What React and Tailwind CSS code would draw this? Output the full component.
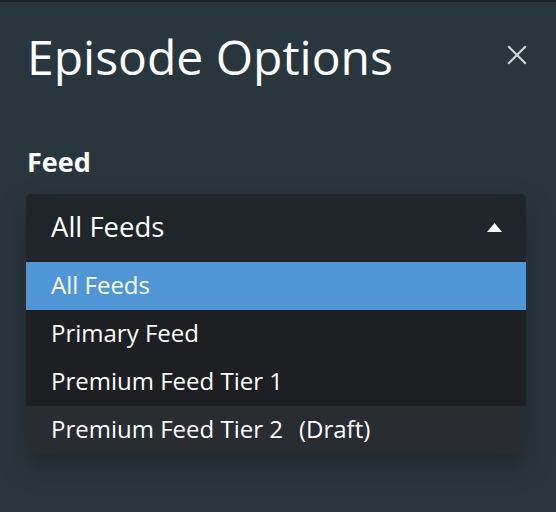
import React from "react";

const font = { fontFamily: '"Open Sans", "Noto Sans", sans-serif' };

export default function App() {
  const options = [
    { label: "All Feeds", cls: "bg-[#5096d6]" },
    { label: "Primary Feed", cls: "bg-[#1e1f23]" },
    { label: "Premium Feed Tier 1", cls: "bg-[#1e1f23]" },
    { label: "Premium Feed Tier 2", extra: "(Draft)", cls: "bg-[#292c30] rounded-b-[5px]" },
  ];
  return (
    <div className="w-[556px] h-[512px] bg-[#2a363e] flex flex-col overflow-hidden" style={font}>
      <div className="h-[2px] bg-[#1b2024] shrink-0" />
      <div className="flex items-start justify-between pl-[27px] pr-[29px] pt-[31px]">
        <h1 className="text-[48px] leading-none text-white font-normal">Episode Options</h1>
        <button className="mt-[12px] w-[20px] h-[20px] flex items-center justify-center text-[#cfd4d7]">
          <svg width="20" height="20" viewBox="0 0 20 20" fill="none" stroke="currentColor" strokeWidth="2.2" strokeLinecap="square">
            <path d="M2 2 L18 18 M18 2 L2 18" />
          </svg>
        </button>
      </div>
      <div className="pl-[26px] pt-[67px]">
        <div className="text-[27px] leading-none font-bold text-white pl-[1px]">Feed</div>
      </div>
      <div className="ml-[26px] mr-[30px] mt-[19px] rounded-[5px] shadow-[0_12px_28px_rgba(0,0,0,0.28)]">
        <div className="h-[68px] bg-[#1f2529] rounded-t-[5px] flex items-center justify-between pl-[25px] pr-[24px]">
          <span className="text-[27.5px] leading-none text-white pb-[3px]">All Feeds</span>
          <svg width="15" height="9" viewBox="0 0 15 9" className="mb-[2px]">
            <path d="M0 9 L7.5 0 L15 9 Z" fill="white" />
          </svg>
        </div>
        {options.map((o) => (
          <div key={o.label} className={`h-[48px] flex items-center pl-[25px] ${o.cls}`}>
            <span className="text-[24px] leading-none text-white pb-[2px]">
              {o.label}
              {o.extra && <span className="ml-[16px]">{o.extra}</span>}
            </span>
          </div>
        ))}
      </div>
    </div>
  );
}
